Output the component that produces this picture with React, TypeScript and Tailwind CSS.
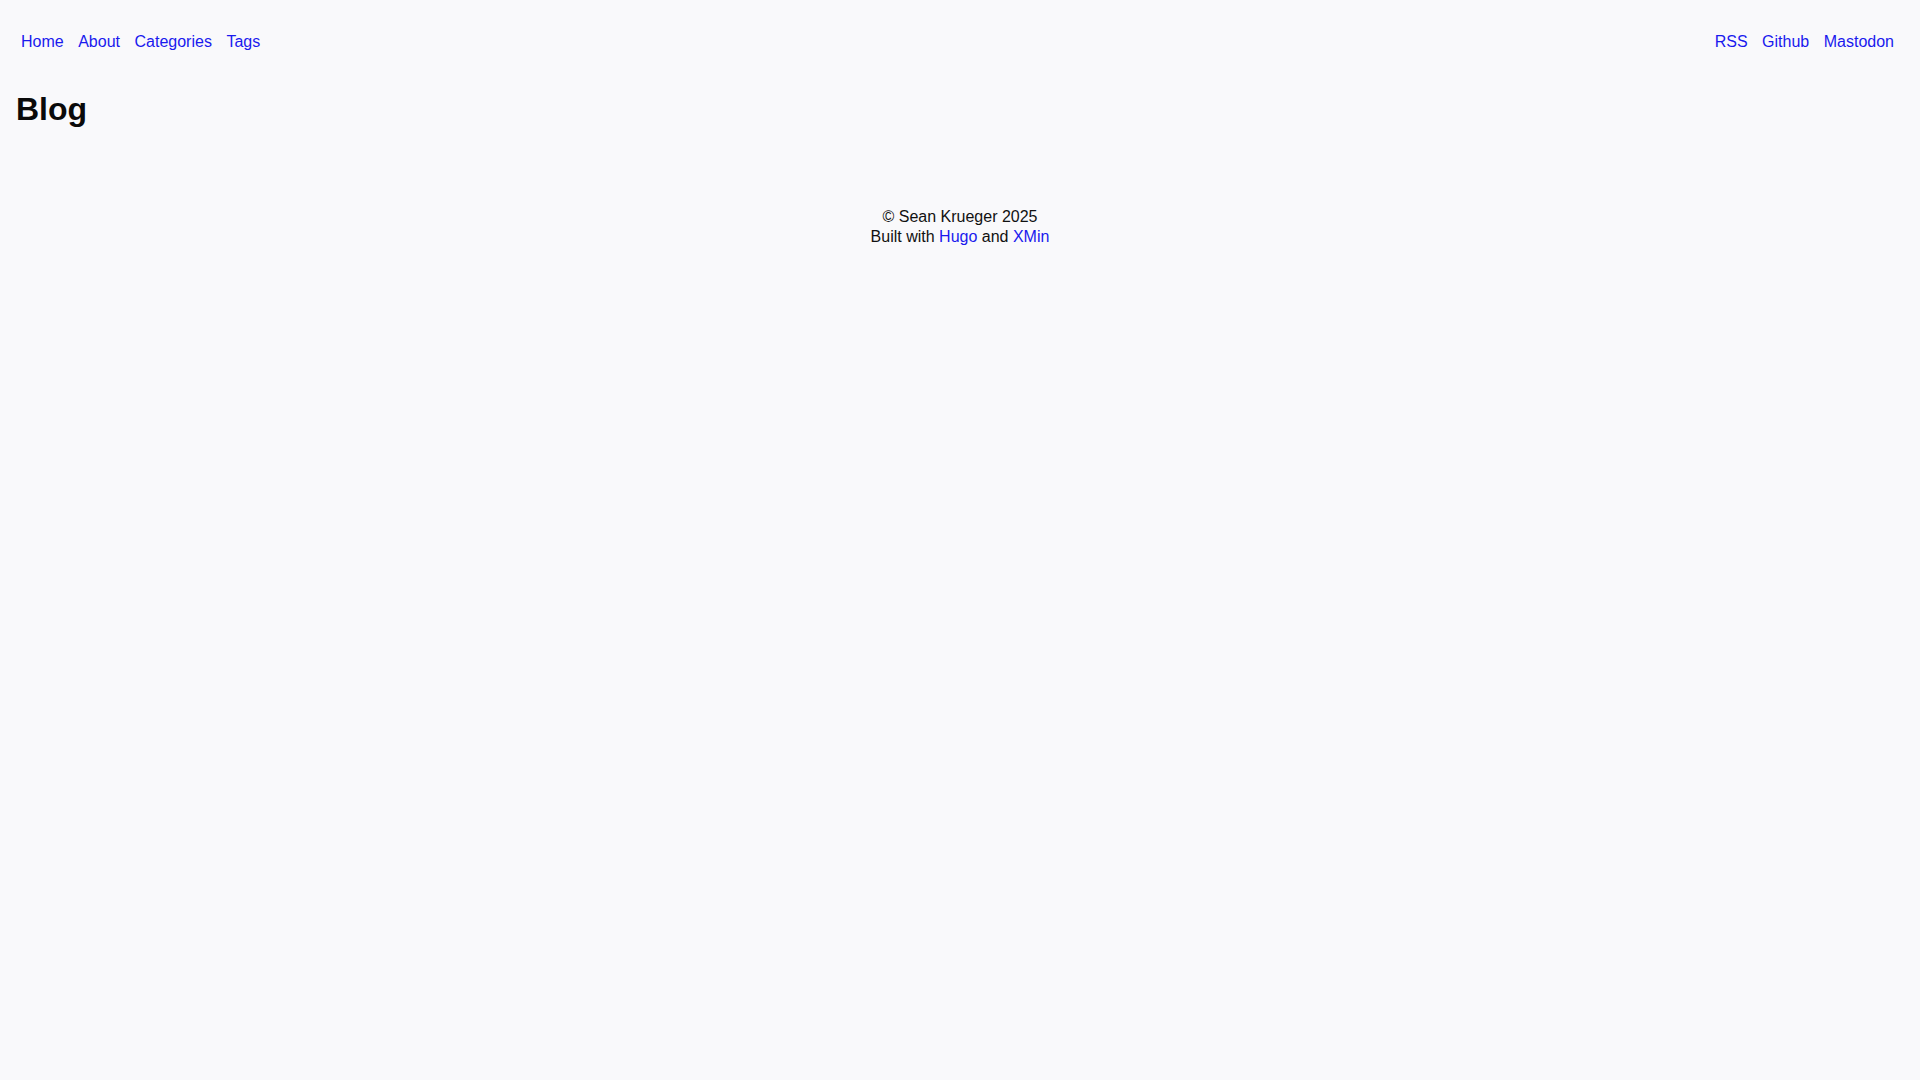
const LEFT_MENU = ['Home', 'About', 'Categories', 'Tags']
const RIGHT_MENU = ['RSS', 'Github', 'Mastodon']

export default function App() {
  return (
    <div className="min-h-screen bg-[#f9f9fb] px-4 font-['Liberation_Sans',Arial,sans-serif] text-[16px] leading-5 text-[#111]">
      <nav className="flex items-center justify-between pt-[32px]">
        <ul className="flex gap-[4.5px]">
          {LEFT_MENU.map((item) => (
            <li key={item}>
              <a href="#" className="px-[5px] text-[#1a1aee]">
                {item}
              </a>
            </li>
          ))}
        </ul>
        <ul className="flex gap-[4.5px] pr-[5px]">
          {RIGHT_MENU.map((item) => (
            <li key={item}>
              <a href="#" className="px-[5px] text-[#1a1aee]">
                {item}
              </a>
            </li>
          ))}
        </ul>
      </nav>

      <main className="pt-[39px]">
        <h1 className="text-[32px] font-bold leading-[37px] text-[#0a0a0a]">Blog</h1>
      </main>

      <footer className="pt-[79px] text-center">
        <p>© Sean Krueger 2025</p>
        <p>
          Built with <a href="#" className="text-[#1a1aee]">Hugo</a> and{' '}
          <a href="#" className="text-[#1a1aee]">XMin</a>
        </p>
      </footer>
    </div>
  )
}
